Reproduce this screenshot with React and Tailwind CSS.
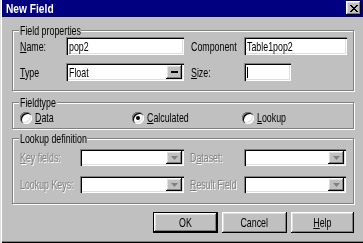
import React from "react";

const sunken =
  "bg-white shadow-[inset_1px_1px_#808080,inset_2px_2px_#000,inset_-1px_-1px_#fff,inset_-2px_-2px_#dfdfdf]";
const raised =
  "bg-[#c0c0c0] shadow-[inset_-1px_-1px_#000,inset_1px_1px_#fff,inset_-2px_-2px_#808080,inset_2px_2px_#dfdfdf]";
const raisedDefault =
  "bg-[#c0c0c0] shadow-[inset_0_0_0_1px_#000,inset_-2px_-2px_#000,inset_2px_2px_#fff,inset_-3px_-3px_#808080,inset_3px_3px_#dfdfdf]";

// narrow text, the old dialog font is tall and thin
const T = ({ children, center }) => (
  <span
    className={
      center
        ? "inline-block origin-center scale-x-[0.68] whitespace-nowrap"
        : "inline-block origin-left scale-x-[0.68] whitespace-nowrap"
    }
  >
    {children}
  </span>
);

const Label = ({ children, w, disabled }) => (
  <div
    className={`${w} shrink-0 text-[13px] leading-none ${
      disabled ? "text-[#808080] [text-shadow:1px_1px_0_#fff]" : "text-black"
    }`}
  >
    <T>{children}</T>
  </div>
);

const Edit = ({ w, value, caret }) => (
  <div className={`${w} h-[18px] ${sunken} flex items-center pl-[3px] text-[13px] leading-none text-black`}>
    {caret ? <span className="w-px h-[11px] bg-black" /> : <T>{value}</T>}
  </div>
);

const Combo = ({ w, h, value, disabled }) => (
  <div className={`${w} ${h} ${sunken} flex items-stretch py-[2px] pr-[2px] pl-[3px] text-[13px] leading-none text-black`}>
    <div className="flex-1 flex items-center">{value && <T>{value}</T>}</div>
    <div className={`w-[16px] ${raised} flex items-center justify-center`}>
      {disabled ? (
        <svg width="7" height="4" viewBox="0 0 7 4">
          <path d="M0 0h7L3.5 4z" fill="#808080" />
        </svg>
      ) : (
        <svg width="7" height="2" viewBox="0 0 7 2">
          <rect width="7" height="2" fill="#000" />
        </svg>
      )}
    </div>
  </div>
);

const Radio = ({ checked }) => (
  <div className="w-[12px] h-[12px] shrink-0 rounded-full bg-white shadow-[inset_1px_1px_#808080,inset_2px_2px_#000,inset_-1px_-1px_#fff,inset_-2px_-2px_#dfdfdf] flex items-center justify-center">
    {checked && <div className="w-[4px] h-[4px] rounded-full bg-black" />}
  </div>
);

const Group = ({ title, tw, className, children }) => (
  <div
    className={`relative ml-[10px] w-[342px] border border-[#808080] shadow-[inset_1px_1px_#fff,1px_1px_#fff] ${className}`}
  >
    <div className={`absolute left-[6px] top-[-7px] h-[13px] ${tw} bg-[#c0c0c0] px-[1px] text-[13px] leading-none text-black`}>
      <T>{title}</T>
    </div>
    {children}
  </div>
);

const Btn = ({ children, def, w }) => (
  <div className={`${w} h-[21px] ${def ? raisedDefault : raised} flex items-center justify-center text-[13px] leading-none text-black`}>
    <T center>{children}</T>
  </div>
);

const CloseGlyph = () => (
  <svg width="8" height="7" viewBox="0 0 8 7" shapeRendering="crispEdges">
    <path
      d="M0 0h2v1H0zM6 0h2v1H6zM1 1h2v1H1zM5 1h2v1H5zM2 2h4v1H2zM3 3h2v1H3zM2 4h4v1H2zM1 5h2v1H1zM5 5h2v1H5zM0 6h2v1H0zM6 6h2v1H6z"
      fill="#000"
    />
  </svg>
);

export default function App() {
  return (
    <div className="w-[363px] h-[243px] overflow-hidden bg-[#c0c0c0] pl-[2px] flex flex-col font-['Liberation_Sans',Arial,sans-serif] shadow-[inset_1px_0_#dfdfdf,inset_2px_0_#fff,inset_0_-1px_#000,inset_0_-2px_#808080]">
      {/* title bar */}
      <div className="h-[17px] shrink-0 bg-[#000080] flex items-start justify-between pl-[4px] pr-[2px]">
        <div className="h-full flex items-center text-white font-bold text-[12px] leading-none">
          <span className="inline-block origin-left scale-x-[0.85] whitespace-nowrap">New Field</span>
        </div>
        <div className={`mt-[1px] w-[15px] h-[14px] ${raised} flex items-center justify-center`}>
          <CloseGlyph />
        </div>
      </div>

      <Group title="Field properties" tw="w-[62px]" className="mt-[13px] pt-[6px] pb-[9px] pl-[7px] flex flex-col gap-[8px]">
        <div className="flex items-center">
          <Label w="w-[46px]">
            <u>N</u>ame:
          </Label>
          <Edit w="w-[118px]" value="pop2" />
          <Label w="w-[53px] ml-[7px]">Component</Label>
          <Edit w="w-[103px]" value="Table1pop2" />
        </div>
        <div className="flex items-center">
          <Label w="w-[46px]">
            <u>T</u>ype
          </Label>
          <Combo w="w-[118px]" h="h-[18px]" value="Float" />
          <Label w="w-[53px] ml-[7px]">
            <u>S</u>ize:
          </Label>
          <Edit w="w-[47px]" caret />
        </div>
      </Group>

      <Group title="Fieldtype" tw="w-[38px]" className="mt-[11px] h-[27px] pt-[8px] pl-[7px] flex items-start">
        <div className="w-[112px] flex items-center gap-[3px]">
          <Radio />
          <Label w="w-auto">
            <u>D</u>ata
          </Label>
        </div>
        <div className="w-[110px] flex items-center gap-[3px]">
          <Radio checked />
          <Label w="w-auto">
            <u>C</u>alculated
          </Label>
        </div>
        <div className="flex items-center gap-[3px]">
          <Radio />
          <Label w="w-auto">
            <u>L</u>ookup
          </Label>
        </div>
      </Group>

      <Group title="Lookup definition" tw="w-[68px]" className="mt-[9px] pt-[10px] pb-[10px] pl-[7px] flex flex-col gap-[10px]">
        <div className="flex items-center">
          <Label w="w-[60px]" disabled>
            <u>K</u>ey fields:
          </Label>
          <Combo w="w-[104px]" h="h-[17px]" disabled />
          <Label w="w-[54px] ml-[6px]" disabled>
            D<u>a</u>taset:
          </Label>
          <Combo w="w-[102px]" h="h-[17px]" disabled />
        </div>
        <div className="flex items-center">
          <Label w="w-[60px]" disabled>
            Lookup Keys:
          </Label>
          <Combo w="w-[104px]" h="h-[17px]" disabled />
          <Label w="w-[54px] ml-[6px]" disabled>
            <u>R</u>esult Field
          </Label>
          <Combo w="w-[102px]" h="h-[17px]" disabled />
        </div>
      </Group>

      <div className="mt-[8px] ml-[10px] w-[342px] flex justify-end gap-[4px]">
        <Btn def w="w-[65px]">OK</Btn>
        <Btn w="w-[65px]">Cancel</Btn>
        <Btn w="w-[63px]">
          <u>H</u>elp
        </Btn>
      </div>
    </div>
  );
}
